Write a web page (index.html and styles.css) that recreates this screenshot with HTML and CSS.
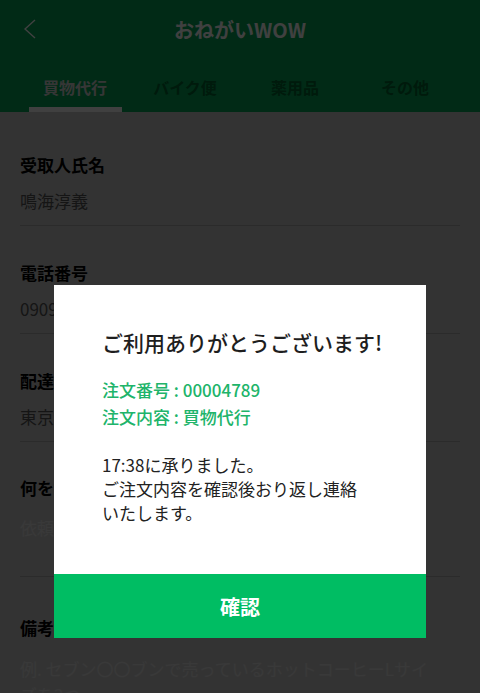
FILE: index.html
```html
<!DOCTYPE html>
<html lang="ja">
<head>
<meta charset="utf-8">
<title>おねがいWOW</title>
<link rel="stylesheet" href="styles.css">
</head>
<body>
<div class="app">
  <header class="header">
    <div class="navbar">
      <svg class="back" width="12" height="20" viewBox="0 0 12 20"><polyline points="11,1 1,10 11,19" fill="none" stroke="#ffffff" stroke-width="1.4"/></svg>
      <div class="nav-title">おねがいWOW</div>
    </div>
    <nav class="tabs">
      <div class="tab active">買物代行</div>
      <div class="tab">バイク便</div>
      <div class="tab">薬用品</div>
      <div class="tab">その他</div>
    </nav>
  </header>
  <main class="form">
    <section class="field first">
      <div class="label">受取人氏名</div>
      <div class="value">鳴海淳義</div>
    </section>
    <section class="field">
      <div class="label">電話番号</div>
      <div class="value">09091234567</div>
    </section>
    <section class="field">
      <div class="label">配達先住所</div>
      <div class="value">東京都港区六本木1-2-3</div>
    </section>
    <section class="field area">
      <div class="label">何を買ってきてほしいですか？</div>
      <div class="value placeholder">依頼内容を入力してください</div>
    </section>
    <section class="field area last">
      <div class="label">備考</div>
      <div class="value placeholder tall">例. セブン〇〇ブンで売っているホットコーヒーLサイ<br>ズを2つ</div>
    </section>
  </main>
</div>

<div class="overlay">
  <div class="modal">
    <div class="modal-body">
      <div class="modal-title">ご利用ありがとうございます!</div>
      <div class="order">
        <div>注文番号 : 00004789</div>
        <div>注文内容 : 買物代行</div>
      </div>
      <div class="msg">17:38に承りました。<br>ご注文内容を確認後おり返し連絡<br>いたします。</div>
    </div>
    <div class="confirm">確認</div>
  </div>
</div>
</body>
</html>
```

FILE: styles.css
```css
* { box-sizing: border-box; }

html, body {
  margin: 0;
  padding: 0;
  width: 480px;
  height: 693px;
  overflow: hidden;
}

body {
  font-family: "Noto Sans CJK JP", "Noto Sans", sans-serif;
  background: #cccccc;
}

.app {
  width: 480px;
  height: 693px;
  display: flex;
  flex-direction: column;
}

.header {
  background: #04a858;
}

.navbar {
  position: relative;
  height: 60px;
  display: flex;
  align-items: center;
  justify-content: center;
}

.back {
  position: absolute;
  left: 24px;
  top: 19px;
}

.nav-title {
  color: #ffffff;
  font-size: 20px;
  font-weight: 700;
  line-height: 30px;
}

.tabs {
  display: grid;
  grid-template-columns: repeat(4, 1fr);
  padding: 0 20px;
  height: 52px;
}

.tab {
  display: flex;
  flex-direction: column;
  align-items: center;
  padding-top: 16px;
  font-size: 16px;
  line-height: 22px;
  font-weight: 700;
  color: #006830;
}

.tab.active {
  color: #d8d8d8;
}

.tab.active::after {
  content: "";
  display: block;
  width: 93px;
  height: 5px;
  margin-top: auto;
  background: #ffffff;
}

.form {
  padding: 0 20px;
  flex: 1;
}

.field {
  padding: 36px 0 13px;
  border-bottom: 1px solid #aaaaaa;
}

.field.first { padding-top: 42px; }

.field.area { padding-top: 35px; padding-bottom: 37px; }
.field.last { padding-top: 40px; border-bottom: none; }

.label {
  font-size: 17px;
  line-height: 22px;
  font-weight: 700;
  color: #000000;
  white-space: nowrap;
}

.value {
  margin-top: 14px;
  font-size: 17px;
  line-height: 22px;
  color: #555555;
  white-space: nowrap;
}

.placeholder {
  margin-top: 18px;
  color: #e2e2e2;
}

.placeholder.tall {
  margin-top: 17px;
  line-height: 26px;
}

.overlay {
  position: fixed;
  inset: 0;
  background: rgba(0, 0, 0, 0.75);
  display: flex;
  justify-content: center;
  align-items: flex-start;
  padding-top: 285px;
}

.modal {
  width: 372px;
  background: #ffffff;
}

.modal-body {
  padding: 42px 40px 49px 48px;
}

.modal-title {
  font-size: 21px;
  line-height: 30px;
  font-weight: 500;
  color: #1e1e1e;
  white-space: nowrap;
}

.order {
  margin-top: 19px;
  font-size: 17px;
  line-height: 27px;
  font-weight: 500;
  color: #20b46a;
}

.msg {
  margin-top: 23px;
  font-size: 17px;
  line-height: 24px;
  color: #222222;
}

.confirm {
  height: 64px;
  background: #00bd63;
  color: #ffffff;
  font-size: 20px;
  font-weight: 700;
  display: flex;
  align-items: center;
  justify-content: center;
}
```
